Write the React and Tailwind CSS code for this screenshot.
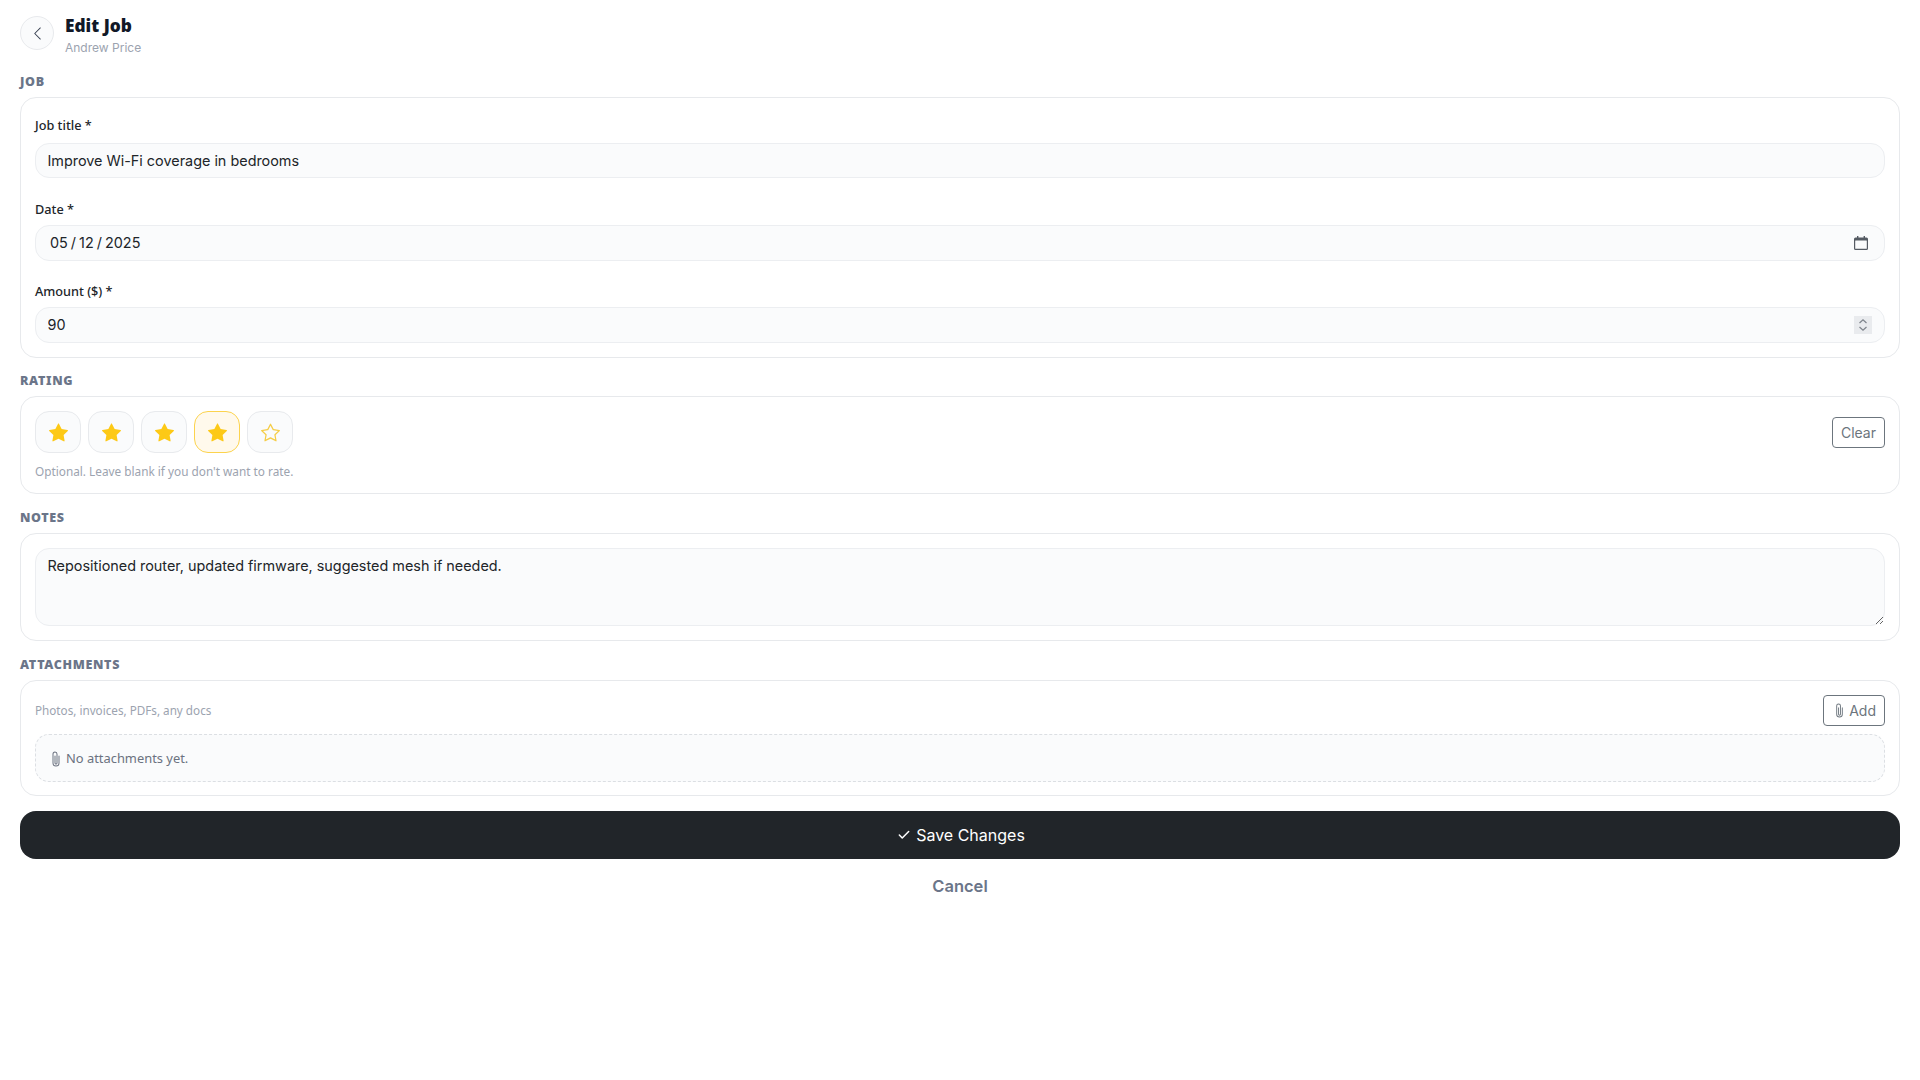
import React from "react";
import { BsChevronLeft, BsStarFill, BsStar, BsPaperclip } from "react-icons/bs";
import { Check } from "lucide-react";

function SectionLabel({ children }) {
  return (
    <div className="font-['Noto_Sans',sans-serif] text-[12.5px] leading-[15px] font-black tracking-[0.65px] uppercase text-[#6b7589] mb-[8px]">
      {children}
    </div>
  );
}

function Card({ children, className = "" }) {
  return (
    <div className={`rounded-[16px] border border-[#e7e9ec] bg-white px-[14px] ${className}`}>
      {children}
    </div>
  );
}

function Field({ label, children, className = "", labelClass = "mb-[7.5px]" }) {
  return (
    <div className={className}>
      <label
        className={`block font-['Noto_Sans',sans-serif] text-[12.7px] leading-[18px] font-medium text-[#212529] ${labelClass}`}
      >
        {label}
      </label>
      {children}
    </div>
  );
}

const boxClass =
  "flex items-center w-full rounded-[14px] border border-[#eceef1] bg-[#fafbfc] font-['Inter',sans-serif] text-[14.4px] text-[#212529]";

function StarButton({ active, filled }) {
  return (
    <button
      type="button"
      className={`flex items-center justify-center w-[46px] h-[42px] rounded-[14px] border ${
        active ? "border-[#fcd34d] bg-[#fff9ec]" : "border-[#e8eaed] bg-[#fafbfc]"
      }`}
    >
      {filled ? (
        <BsStarFill className="w-[19px] h-[19px] text-[#fdc916]" />
      ) : (
        <BsStar className="w-[19px] h-[19px] text-[#f5cd47]" />
      )}
    </button>
  );
}

function CalendarIcon() {
  return (
    <svg width="14" height="14" viewBox="0 0 14 14" className="shrink-0">
      <path d="M3 0h1.4v1.5h5.2V0H11v1.5h1.5A1.5 1.5 0 0 1 14 3v9.5a1.5 1.5 0 0 1-1.5 1.5h-11A1.5 1.5 0 0 1 0 12.5V3a1.5 1.5 0 0 1 1.5-1.5H3z" fill="#555b63" />
      <rect x="1.2" y="4.4" width="11.6" height="8.4" rx="0.4" fill="#fafbfc" />
    </svg>
  );
}

function Spinner() {
  return (
    <div className="flex items-center justify-center w-[18px] h-[18px] bg-[#e9ebee] shrink-0">
      <svg width="10" height="14" viewBox="0 0 10 14" fill="none" stroke="#7d838b" strokeWidth="1.2">
        <path d="M1.5 5 5 1.8 8.5 5" />
        <path d="M1.5 9 5 12.2 8.5 9" />
      </svg>
    </div>
  );
}

export default function App() {
  return (
    <div className="min-h-screen bg-white px-[20px] pt-[16px] font-['Inter',sans-serif]">
      {/* Header */}
      <div className="flex items-start gap-[11px] mb-[17px]">
        <button
          type="button"
          className="flex items-center justify-center w-[34px] h-[34px] rounded-full border border-[#e8eaed] bg-[#fafbfc] text-[#374151]"
        >
          <BsChevronLeft className="w-[15px] h-[15px]" />
        </button>
        <div>
          <div className="font-['Noto_Sans',sans-serif] text-[17.3px] leading-[20px] font-black text-[#111827]">Edit Job</div>
          <div className="text-[12px] leading-[18px] text-[#9ca3af] mt-[3px]">Andrew Price</div>
        </div>
      </div>

      <SectionLabel>Job</SectionLabel>
      <Card className="pt-[18px] pb-[14px]">
        <Field label="Job title *" labelClass="mb-[9px]">
          <div className={`${boxClass} h-[34.5px] pl-[11.5px] pr-[12px] pt-[1px]`}>
            <input className="flex-1 min-w-0 bg-transparent outline-none" defaultValue="Improve Wi-Fi coverage in bedrooms" />
          </div>
        </Field>
        <Field label="Date *" className="mt-[22px]">
          <div className={`${boxClass} h-[35.5px] pl-[14px] pr-[16px]`}>
            <input className="flex-1 min-w-0 bg-transparent outline-none [word-spacing:-1px]" defaultValue="05 / 12 / 2025" />
            <CalendarIcon />
          </div>
        </Field>
        <Field label="Amount ($) *" className="mt-[21px]">
          <div className={`${boxClass} h-[35.5px] pl-[11.5px] pr-[12px] pt-[1px]`}>
            <input className="flex-1 min-w-0 bg-transparent outline-none" defaultValue="90" />
            <Spinner />
          </div>
        </Field>
      </Card>

      <div className="mt-[15.5px]">
        <SectionLabel>Rating</SectionLabel>
        <Card className="pt-[14px] pb-[14px]">
          <div className="flex items-center justify-between">
            <div className="flex gap-[7px]">
              <StarButton filled />
              <StarButton filled />
              <StarButton filled />
              <StarButton filled active />
              <StarButton />
            </div>
            <button
              type="button"
              className="h-[31px] px-[8px] rounded-[4px] border border-[#6c757d] text-[14px] text-[#6c757d]"
            >
              Clear
            </button>
          </div>
          <div className="font-['Noto_Sans',sans-serif] text-[11.8px] leading-[16px] text-[#9ca3af] mt-[10px]">
            Optional. Leave blank if you don't want to rate.
          </div>
        </Card>
      </div>

      <div className="mt-[16px]">
        <SectionLabel>Notes</SectionLabel>
        <Card className="pt-[14px] pb-[14px]">
          <textarea
            className="block w-full h-[78px] rounded-[14px] border border-[#eceef1] bg-[#fafbfc] pl-[11.5px] pr-[12px] py-[7px] text-[14.4px] leading-[20px] text-[#212529] outline-none"
            defaultValue="Repositioned router, updated firmware, suggested mesh if needed."
          />
        </Card>
      </div>

      <div className="mt-[16px]">
        <SectionLabel>Attachments</SectionLabel>
        <Card className="pt-[14px] pb-[13px]">
          <div className="flex items-center justify-between">
            <span className="font-['Noto_Sans',sans-serif] text-[11.7px] text-[#9ca3af]">Photos, invoices, PDFs, any docs</span>
            <button
              type="button"
              className="flex items-center gap-[2px] h-[31px] px-[8px] rounded-[4px] border border-[#6c757d] text-[14px] text-[#6c757d]"
            >
              <BsPaperclip className="w-[15px] h-[15px]" /> Add
            </button>
          </div>
          <div className="flex items-center gap-[2px] h-[48px] mt-[8px] px-[12px] pt-[2px] rounded-[14px] border border-dashed border-[#dcdfe3] bg-[#fafbfc] font-['Noto_Sans',sans-serif] text-[12.9px] text-[#6b7280]">
            <BsPaperclip className="w-[16px] h-[16px]" /> No attachments yet.
          </div>
        </Card>
      </div>

      <button
        type="button"
        className="mt-[15px] flex items-center justify-center gap-[5px] w-full h-[48px] pl-[2px] rounded-[16px] bg-[#212529] text-white text-[16px]"
      >
        <Check className="w-[14px] h-[14px]" strokeWidth={2.6} /> Save Changes
      </button>
      <div className="text-center mt-[15px] text-[16.5px] leading-[24px] font-semibold text-[#6b7589]">Cancel</div>
    </div>
  );
}
